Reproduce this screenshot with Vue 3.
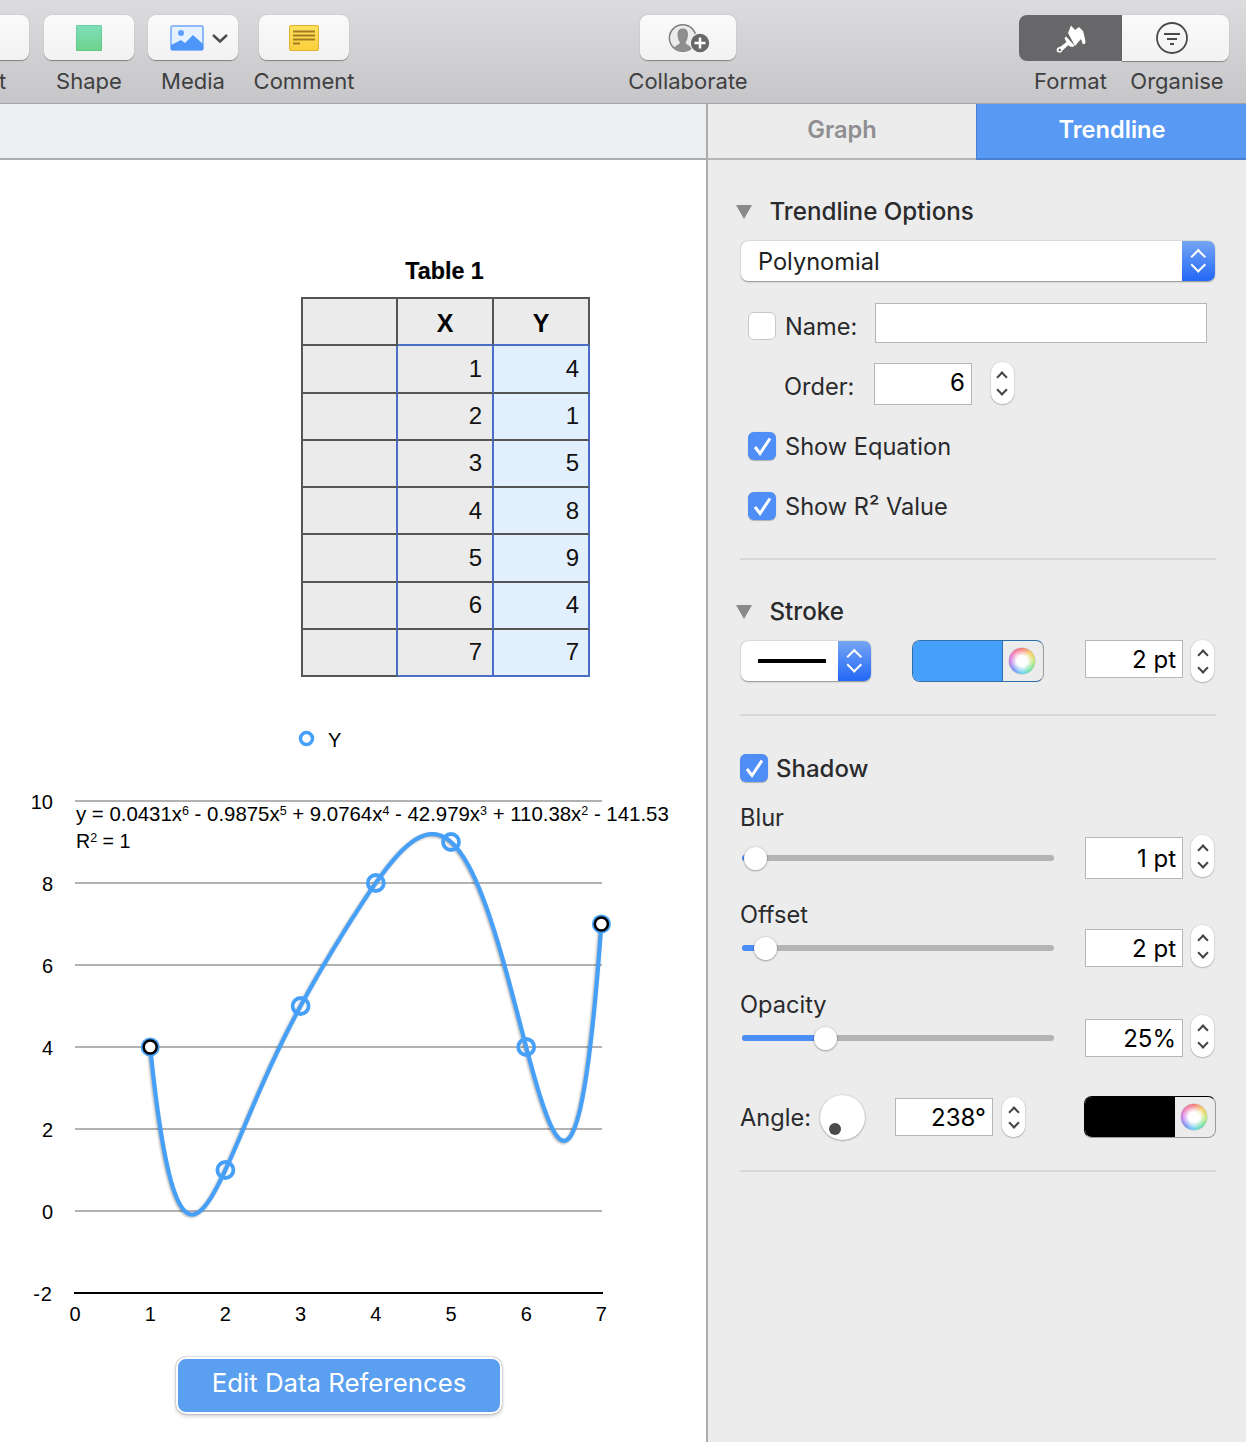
<script setup>
const pts = [[1,4],[2,1],[3,5],[4,8],[5,9],[6,4],[7,7]]
const px = x => 75 + 75.2 * x
const py = y => 1211 - 41 * y
const lagrange = x => pts.reduce((sum, [xi, yi], i) => {
  let t = yi
  pts.forEach(([xj], j) => { if (j !== i) t *= (x - xj) / (xi - xj) })
  return sum + t
}, 0)
let d = ''
for (let i = 0; i <= 240; i++) {
  const x = 1 + i * 6 / 240
  d += (i ? 'L' : 'M') + px(x).toFixed(2) + ' ' + py(lagrange(x)).toFixed(2)
}
const curve = d
const yTicks = [10, 8, 6, 4, 2, 0]
const xTicks = [0, 1, 2, 3, 4, 5, 6, 7]
const rows = pts
const sliders = [
  { name: 'Blur', value: '1 pt', knob: 13, cls: 'first' },
  { name: 'Offset', value: '2 pt', knob: 23, cls: 'second' },
  { name: 'Opacity', value: '25%', knob: 83, cls: 'third' }
]
</script>

<template>
  <div class="app">
    <header class="toolbar">
      <div class="tool t-text"><div class="tbtn"></div><span>Text</span></div>
      <div class="tool t-shape">
        <div class="tbtn"><i class="shape-ico"></i></div><span>Shape</span>
      </div>
      <div class="tool t-media">
        <div class="tbtn">
          <svg class="media-ico" width="60" height="26" viewBox="0 0 60 26">
            <rect x="1" y="1" width="32" height="24" rx="1.500" fill="#e6f1fe" stroke="#6ea6fb" stroke-width="1.500"/>
            <path d="M1 20 L11 15 L15 18 L23 10 L33 19 V25 H1Z" fill="#4f96fb"/>
            <circle cx="11" cy="8" r="3" fill="#5d9ffb"/>
            <path d="M43 10 L50 16.500 L57 10" fill="none" stroke="#4c4c4e" stroke-width="2.400"/>
          </svg>
        </div><span>Media</span>
      </div>
      <div class="tool t-comment">
        <div class="tbtn">
          <svg width="30" height="26" viewBox="0 0 30 26">
            <defs><linearGradient id="note" x1="0" y1="0" x2="0" y2="1"><stop offset="0" stop-color="#fde25a"/><stop offset="1" stop-color="#fbcf3e"/></linearGradient></defs>
            <rect x=".5" y=".5" width="29" height="25" rx="1.500" fill="url(#note)" stroke="#e5b032"/>
            <path d="M4 6.500H26M4 10.500H26M4 14.500H26M4 18.500H11" stroke="#a17a24" stroke-width="2"/>
          </svg>
        </div><span>Comment</span>
      </div>
      <div class="tool t-collab">
        <div class="tbtn">
          <svg width="55" height="40" viewBox="0 0 55 40">
            <circle cx="21.700" cy="20" r="13.300" fill="#ececec" stroke="#808080" stroke-width="1.500"/>
            <path d="M12.500 30.500 C13.500 27.500 18.500 27 19 24.500 C17 22 16.500 18.500 16.500 16 C16.500 12.500 18.500 10.500 21.700 10.500 C25 10.500 27 12.500 27 16 C27 18.500 26.500 22 24.500 24.500 C25 27 30 27.500 31 30.500 C27 34.500 17 34.500 12.500 30.500Z" fill="#8e8e8e"/>
            <circle cx="39" cy="25" r="9.800" fill="#686868" stroke="#f4f4f4" stroke-width="1.200"/>
            <path d="M39 19.500 V30.500 M33.500 25 H44.500" stroke="#fff" stroke-width="2.500"/>
          </svg>
        </div><span>Collaborate</span>
      </div>
      <div class="tool t-format">
        <div class="seg seg-on">
          <svg width="50" height="40" viewBox="0 0 50 40">
            <path d="M22 15 L25 7.500 L29 12 L33 9 L37 13 C38 16 39 20 39.500 24 C39.500 27 36 27 36 24 L35 21 L29 28 Z" fill="#fff"/>
            <path d="M18.500 20 L20 18.500 L28.500 27.500 L27 29 L24 28.500 L21.500 26.500 Z" fill="#fff"/>
            <path d="M20.500 24 L23 26.500 L16.500 32.500 C15.500 35.500 12 35 11 33.500 C10 31.500 11.500 28.800 14.500 28.800 Z" fill="#fff"/>
            <circle cx="13.800" cy="32" r="1.300" fill="#676769"/>
          </svg>
        </div>
        <span>Format</span>
      </div>
      <div class="tool t-organise">
        <div class="seg seg-off">
          <svg class="org-ico" width="32" height="32" viewBox="0 0 32 32">
            <circle cx="16" cy="16" r="15" fill="none" stroke="#4a4a4c" stroke-width="1.800"/>
            <path d="M8 12H24M11 17H21M14 22H18" stroke="#4a4a4c" stroke-width="1.800"/>
          </svg>
        </div>
        <span class="org-lbl">Organise</span>
      </div>
    </header>

    <div class="body">
      <main class="left">
        <div class="subbar"></div>
        <div class="canvas">
          <div class="tbl-title">Table 1</div>
          <div class="tbl">
            <div class="cell c-head c-first"></div>
            <div class="cell c-head c-x b-blue-b">X</div>
            <div class="cell c-head c-y b-blue-b">Y</div>
            <template v-for="(r, i) in rows" :key="i">
              <div class="cell c-first c-first-row"></div>
              <div class="cell c-x c-val" :class="{ 'b-blue-b': i === rows.length - 1 }">{{ r[0] }}</div>
              <div class="cell c-y c-val c-sel" :class="{ 'b-blue-b': i === rows.length - 1 }">{{ r[1] }}</div>
            </template>
          </div>

          <svg class="chart" width="706" height="620" viewBox="0 720 706 620">
            <circle cx="306.500" cy="738.500" r="6" fill="none" stroke="#47a0f8" stroke-width="3.500"/>
            <text x="328" y="747" class="ct">Y</text>

            <g v-for="t in yTicks" :key="t">
              <line x1="75" x2="602" :y1="py(t)" :y2="py(t)" stroke="#b2b2b2" stroke-width="2"/>
              <text x="53" :y="py(t) + 8" text-anchor="end" class="ct">{{ t }}</text>
            </g>
            <line x1="74" x2="603" y1="1293" y2="1293" stroke="#000" stroke-width="2"/>
            <text x="53" y="1301" text-anchor="end" class="ct minus">-2</text>
            <text v-for="t in xTicks" :key="t" :x="px(t)" y="1321" text-anchor="middle" class="ct">{{ t }}</text>

            <text x="76" y="821" class="ct eq">y = 0.0431x<tspan class="sp" dy="-6">6</tspan><tspan dy="6"> - 0.9875x</tspan><tspan class="sp" dy="-6">5</tspan><tspan dy="6"> + 9.0764x</tspan><tspan class="sp" dy="-6">4</tspan><tspan dy="6"> - 42.979x</tspan><tspan class="sp" dy="-6">3</tspan><tspan dy="6"> + 110.38x</tspan><tspan class="sp" dy="-6">2</tspan><tspan dy="6"> - 141.53</tspan></text>
            <text x="76" y="848" class="ct r2">R<tspan class="sp" dy="-6">2</tspan><tspan dy="6"> = 1</tspan></text>

            <path class="curve" :d="curve" fill="none" stroke="#47a0f8" stroke-width="4.200" stroke-linejoin="round"/>
            <g v-for="(p, i) in pts" :key="i">
              <template v-if="i === 0 || i === pts.length - 1">
                <circle :cx="px(p[0])" :cy="py(p[1])" r="9.500" fill="#47a0f8"/>
                <circle :cx="px(p[0])" :cy="py(p[1])" r="6.500" fill="#fff" stroke="#000" stroke-width="2.500"/>
              </template>
              <circle v-else :cx="px(p[0])" :cy="py(p[1])" r="8" fill="none" stroke="#47a0f8" stroke-width="3.800"/>
            </g>
          </svg>

          <button class="edit-btn">Edit Data References</button>
        </div>
      </main>

      <aside class="side">
        <nav class="tabs">
          <div class="tab">Graph</div>
          <div class="tab tab-on">Trendline</div>
        </nav>
        <div class="panel">
          <div class="sec-head"><i class="tri"></i>Trendline Options</div>
          <div class="select sel-wide"><span class="sel-text">Polynomial</span><i class="sel-step"></i></div>

          <div class="row r-name">
            <i class="check off"></i>
            <span class="lbl">Name:</span>
            <div class="field f-name"></div>
          </div>
          <div class="row r-order">
            <span class="lbl">Order:</span>
            <div class="field f-order">6</div>
            <i class="stepper st-order"></i>
          </div>
          <div class="row r-eq">
            <i class="check on"><svg width="28" height="28" viewBox="0 0 28 28"><path d="M7 15 L12 21.500 L22 6.500" fill="none" stroke="#fff" stroke-width="3"/></svg></i>
            <span class="lbl">Show Equation</span>
          </div>
          <div class="row r-r2">
            <i class="check on"><svg width="28" height="28" viewBox="0 0 28 28"><path d="M7 15 L12 21.500 L22 6.500" fill="none" stroke="#fff" stroke-width="3"/></svg></i>
            <span class="lbl">Show R² Value</span>
          </div>
          <div class="divider d1"></div>

          <div class="sec-head h-stroke"><i class="tri"></i>Stroke</div>
          <div class="row r-stroke">
            <div class="select sel-line"><i class="line-sample"></i><i class="sel-step"></i></div>
            <div class="well w-blue"><i class="swatch"></i><i class="wheel"></i></div>
            <div class="field f-val f-thin">2 pt</div>
            <i class="stepper st-right"></i>
          </div>
          <div class="divider d2"></div>

          <div class="row r-shadow">
            <i class="check on"><svg width="28" height="28" viewBox="0 0 28 28"><path d="M7 15 L12 21.500 L22 6.500" fill="none" stroke="#fff" stroke-width="3"/></svg></i>
            <span class="lbl">Shadow</span>
          </div>

          <div v-for="s in sliders" :key="s.name" class="sgroup" :class="s.cls">
            <div class="sleft">
              <div class="slbl">{{ s.name }}</div>
              <div class="track">
                <i class="fill" :style="{ width: s.knob + 'px' }"></i>
                <i class="knob" :style="{ left: s.knob - 11.5 + 'px' }"></i>
              </div>
            </div>
            <div class="field f-val">{{ s.value }}</div>
            <i class="stepper st-right"></i>
          </div>

          <div class="row r-angle">
            <span class="lbl a-lbl">Angle:</span>
            <div class="dial"><i class="dot"></i></div>
            <div class="field f-angle">238°</div>
            <i class="stepper st-angle"></i>
            <div class="well w-black"><i class="swatch"></i><i class="wheel"></i></div>
          </div>
          <div class="divider d3"></div>
        </div>
      </aside>
    </div>
  </div>
</template>

<style>
html, body { margin: 0; background: #fff; }
</style>

<style scoped>
.app {
  width: 1246px;
  height: 1442px;
  overflow: hidden;
  display: flex;
  flex-direction: column;
  font-family: Inter, "Liberation Sans", sans-serif;
  color: #2a2a2c;
}
i { display: block; }

/* toolbar */
.toolbar {
  height: 104px;
  box-sizing: border-box;
  flex: none;
  display: flex;
  align-items: flex-start;
  padding-top: 15px;
  background: linear-gradient(#dcdcde, #c6c6c8);
  border-bottom: 1.500px solid #a4a4a6;
}
.tool {
  flex: none;
  display: flex;
  flex-direction: column;
  align-items: center;
  font-size: 22px;
  color: #3f3f41;
}
.tool > span { white-space: nowrap; margin-top: 8px; line-height: 26px; }
.tbtn {
  box-sizing: border-box;
  width: 100%;
  height: 45px;
  background: linear-gradient(#fafafa, #f2f2f2);
  border-radius: 8px;
  box-shadow: 0 .5px 1px rgba(0, 0, 0, .38);
  display: flex;
  align-items: center;
  justify-content: center;
}
.media-ico { margin-left: 13px; }
.t-text { width: 90px; margin-left: -61px; }
.t-shape { width: 90px; margin-left: 15px; }
.t-media { width: 90px; margin-left: 14px; }
.t-comment { width: 90px; margin-left: 21px; }
.t-collab { width: 96px; margin-left: 291px; }
.t-format { width: 103px; margin-left: 283px; }
.t-organise { width: 107px; }
.shape-ico {
  width: 26px;
  height: 26px;
  border-radius: 1.500px;
  background: linear-gradient(#7fdfbd, #6dd28a);
  box-shadow: inset 0 0 0 .5px rgba(60, 160, 100, .5);
}
.seg {
  height: 46px;
  margin-bottom: -1px;
  width: 100%;
  box-sizing: border-box;
  display: flex;
  align-items: center;
  justify-content: center;
}
.seg-on { background: #676769; border-radius: 8px 0 0 8px; }
.seg-off {
  background: linear-gradient(#fafafa, #f2f2f2);
  border-radius: 0 8px 8px 0;
  box-shadow: 0 .5px 1px rgba(0, 0, 0, .38);
}
.org-ico { margin-right: 7px; }
.tool > .org-lbl { margin-left: 3px; }

.body { flex: 1; display: flex; min-height: 0; }

/* left */
.left { width: 706px; flex: none; display: flex; flex-direction: column; }
.subbar {
  height: 56px;
  box-sizing: border-box;
  background: #eeeff3;
  border-bottom: 2px solid #a9adb2;
  flex: none;
}
.canvas {
  flex: 1;
  background: #fff;
  font-family: "Liberation Sans", Arial, sans-serif;
  color: #000;
  padding-top: 96px;
}
.tbl-title {
  font-weight: 700;
  font-size: 23.300px;
  line-height: 30px;
  width: 287px;
  margin-left: 301px;
  text-align: center;
  -webkit-text-stroke: .2px #000;
}
.tbl {
  margin: 11px 0 0 301px;
  width: 289px;
  box-sizing: border-box;
  display: grid;
  grid-template-columns: 95px 96px 96px;
  grid-auto-rows: 47.250px;
  border-top: 2px solid #555;
  border-left: 2px solid #555;
}
.cell {
  box-sizing: border-box;
  background: #ebebeb;
  border-right: 2px solid #555;
  border-bottom: 2px solid #555;
  display: flex;
  align-items: center;
  font-size: 24px;
  color: #111;
}
.c-head {
  font-weight: 700;
  justify-content: center;
  font-size: 25px;
  color: #000;
  padding-top: 3px;
}
.c-first-row { border-right-color: #4a6ec8; }
.c-val { justify-content: flex-end; border-right-color: #4a6ec8; }
.c-x.c-val { padding-right: 10px; }
.c-y.c-val { padding-right: 9px; }
.c-sel { background: #e2f0fe; }
.b-blue-b { border-bottom-color: #4a6ec8; }
.chart { display: block; margin-top: 43px; }
.ct { font-family: "Liberation Sans", Arial, sans-serif; font-size: 20px; fill: #000; }
.minus { letter-spacing: 1px; }
.eq { font-size: 20.400px; }
.r2 { font-size: 19.600px; }
.sp { font-size: 12.500px; }
.curve { filter: drop-shadow(-1px 1.700px 1px rgba(0, 0, 0, .3)); }
.edit-btn {
  display: block;
  margin: 17px 0 0 176px;
  width: 326px;
  height: 57px;
  border: 2.500px solid #fff;
  border-radius: 10px;
  background: #5b9ff0;
  box-shadow: 0 0 1.500px rgba(0, 0, 0, .5), 0 2px 4px rgba(0, 0, 0, .2);
  color: #fff;
  font-family: Inter, "Liberation Sans", sans-serif;
  font-size: 25.800px;
  padding: 0 0 7px;
}

/* side */
.side {
  flex: 1;
  background: #ececec;
  border-left: 2px solid #acacac;
  display: flex;
  flex-direction: column;
  min-width: 0;
}
.tabs { display: flex; height: 56px; flex: none; }
.tab {
  box-sizing: border-box;
  width: 268px;
  flex: none;
  display: flex;
  align-items: center;
  justify-content: center;
  font-size: 23.600px;
  font-weight: 600;
  color: #8f8f91;
  border-bottom: 2px solid #b7b7b7;
  padding-bottom: 3px;
}
.tab-on {
  width: 270px;
  padding-left: 1px;
  background: #5899f3;
  color: #fff;
  border-bottom-color: #4a7fd0;
  border-left: 1px solid #4a7fd0;
}
.panel { padding: 36px 30px 0 32px; font-size: 23.600px; }
.sec-head {
  height: 30px;
  display: flex;
  align-items: center;
  font-size: 24.200px;
  font-weight: 500;
  color: #2a2a2c;
}
.tri {
  width: 0;
  height: 0;
  margin: 2px 17.400px 0 -4px;
  border-left: 8.800px solid transparent;
  border-right: 8.800px solid transparent;
  border-top: 14px solid #8a8a8a;
}
.h-stroke { margin-top: 36px; }
.select {
  box-sizing: border-box;
  height: 40px;
  background: #fff;
  border-radius: 7px;
  box-shadow: 0 .5px 1.500px rgba(0, 0, 0, .4);
  display: flex;
  align-items: center;
  overflow: hidden;
}
.sel-wide { margin: 15px 0 0 1px; width: 474px; }
.sel-text { flex: 1; padding: 1px 0 0 17px; color: #222; }
.sel-step {
  position: relative;
  width: 33px;
  height: 100%;
  flex: none;
  background: linear-gradient(#76a5f4, #2268f6);
}
.sel-step::before, .sel-step::after {
  content: "";
  position: absolute;
  left: 11.250px;
  width: 10.500px;
  height: 10.500px;
  box-sizing: border-box;
  border-left: 2.400px solid #fff;
  border-top: 2.400px solid #fff;
  transform: rotate(45deg);
}
.sel-step::before { top: 10.200px; }
.sel-step::after { top: 19.400px; transform: rotate(225deg); }

.row { display: flex; align-items: center; }
.lbl { color: #2a2a2c; white-space: nowrap; }
.check {
  box-sizing: border-box;
  width: 28px;
  height: 28px;
  border-radius: 6px;
  flex: none;
  display: flex;
  align-items: center;
  justify-content: center;
}
.check.off { background: #fff; border: 1.500px solid #c8c8c8; }
.check.on { background: #4f8ef7; box-shadow: 0 .5px 1px rgba(0, 0, 0, .25); }
.field {
  box-sizing: border-box;
  background: #fff;
  border: 1.500px solid #b6b6b6;
  color: #000;
  text-align: right;
  padding-right: 6px;
  flex: none;
  font-size: 24px;
}
.r-name { margin-top: 22px; height: 40px; padding-left: 8px; }
.r-name .check { margin-top: 6px; }
.r-name .lbl { margin: 7px 0 0 9px; width: 90px; }
.f-name { width: 332px; height: 40px; }
.r-order { margin-top: 19px; height: 43px; padding-left: 44px; }
.r-order .lbl { width: 90px; margin-top: 6px; }
.f-order { width: 98px; height: 42px; line-height: 38px; margin-top: 1px; padding-right: 6px; }
.stepper {
  position: relative;
  width: 23px;
  height: 42px;
  flex: none;
  box-sizing: border-box;
  background: #fff;
  border-radius: 11px;
  box-shadow: 0 .5px 1.500px rgba(0, 0, 0, .42);
}
.stepper::before, .stepper::after {
  content: "";
  position: absolute;
  left: 7.500px;
  width: 8px;
  height: 8px;
  border-left: 2.200px solid #444;
  border-top: 2.200px solid #444;
  transform: rotate(45deg);
  box-sizing: border-box;
}
.stepper::before { top: 10.700px; }
.stepper::after { top: 24.300px; transform: rotate(225deg); }
.st-order { margin: -1px 0 0 18.500px; }
.r-eq { margin-top: 27px; height: 28px; padding-left: 8px; }
.r-r2 { margin-top: 32px; height: 28px; padding-left: 8px; }
.r-eq .lbl, .r-r2 .lbl { margin: 1px 0 0 9px; }
.divider { height: 2px; background: #d8d8d8; }
.d1 { margin-top: 38px; }
.d2 { margin-top: 32px; }
.d3 { margin-top: 30px; }

.r-stroke { margin-top: 14px; height: 42px; align-items: flex-start; }
.sel-line { width: 130px; margin: 1px 0 0 1px; }
.line-sample { width: 68px; height: 3.500px; background: #000; margin: 0 12px 0 17px; flex: none; }
.well {
  box-sizing: border-box;
  width: 132px;
  height: 42px;
  display: flex;
  align-items: center;
  flex: none;
  border-radius: 8px;
  border: 1px solid #9a9a9a;
  overflow: hidden;
}
.swatch { width: 90px; height: 100%; flex: none; }
.w-blue { margin-left: 41px; }
.w-blue .swatch { background: #44a0fa; border-right: 1px solid #2e6ea8; box-sizing: border-box; }
.w-blue { border-color: #2e6ea8 #9a9a9a #2e6ea8 #2e6ea8; }
.w-black { margin-left: 59px; }
.w-black .swatch { background: #000; }
.w-black { border-color: #000 #9a9a9a #9a9a9a #000; }
.wheel {
  width: 26px;
  height: 26px;
  border-radius: 50%;
  margin-left: 6px;
  flex: none;
  background:
    radial-gradient(circle, #fff 0, #fff 28%, rgba(255, 255, 255, 0) 75%),
    conic-gradient(#f25c5c, #f4c13c, #b9e25a, #4fdc8a, #4cc9ee, #5a7cf0, #c05ee6, #f25c9c, #f25c5c);
  box-shadow: 0 0 0 .5px rgba(0, 0, 0, .2);
}
.f-val {
  width: 98px;
  height: 38px;
  line-height: 38px;
}
.f-thin { margin-left: 41px; }
.st-right { margin-left: 8px; }

.r-shadow { margin-top: 38px; height: 28px; }
.r-shadow .lbl { margin-left: 8px; font-size: 24px; font-weight: 500; }
.sgroup { display: flex; align-items: flex-end; padding-right: 1px; }
.sleft { width: 345px; flex: none; }
.slbl { height: 30px; line-height: 30px; color: #2a2a2c; }
.track {
  position: relative;
  width: 312px;
  height: 6px;
  margin: 15px 0 16px 2px;
  border-radius: 3px;
  background: #b4b4b4;
}
.fill { position: absolute; left: 0; top: 0; height: 6px; border-radius: 3px; background: #4d8df6; }
.knob {
  position: absolute;
  top: -8.500px;
  width: 23px;
  height: 23px;
  border-radius: 50%;
  background: #fff;
  box-shadow: 0 .5px 2px rgba(0, 0, 0, .5);
}
.first { margin-top: 21px; }
.first .f-val { height: 42px; line-height: 41px; }
.first .track { margin: 22px 0 18px 2px; }
.first .stepper { margin-bottom: 2px; }
.second { margin-top: 21px; }
.third { margin-top: 23px; }

.r-angle { margin-top: 39px; height: 44px; align-items: flex-start; }
.a-lbl { width: 80px; line-height: 44px; }
.dial {
  position: relative;
  width: 45px;
  height: 45px;
  margin-top: -1px;
  border-radius: 50%;
  background: #fff;
  flex: none;
  box-shadow: 0 .5px 2px rgba(0, 0, 0, .45);
}
.dot {
  position: absolute;
  left: 9px;
  top: 28px;
  width: 12px;
  height: 12px;
  border-radius: 50%;
  background: #4a4a4a;
}
.f-angle { width: 98px; height: 38px; line-height: 37px; margin: 2px 0 0 30px; }
.st-angle { margin: 1px 0 0 9px; height: 40px; }
.st-angle::after { top: 22.300px; }
</style>
